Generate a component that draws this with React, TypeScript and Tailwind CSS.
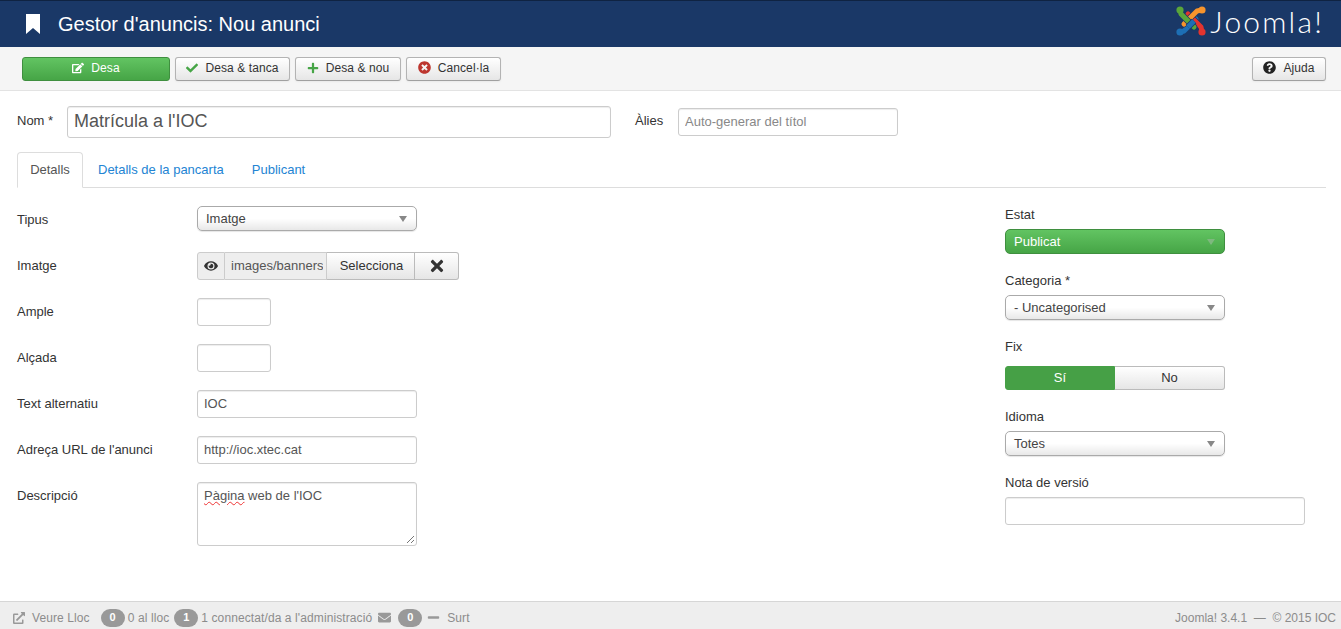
import type { ReactNode } from 'react'
import { FaCheck, FaPlus, FaTimes, FaTimesCircle, FaQuestionCircle, FaEye, FaEnvelope, FaMinus, FaEdit, FaExternalLinkAlt } from 'react-icons/fa'

function ToolButton({ icon, label, className = '' }: { icon: ReactNode; label: string; className?: string }) {
  return (
    <button className={`h-[24px] pb-[2px] flex items-center justify-center gap-[7px] rounded-[3px] border border-[#b3b3b3] border-b-[#a0a0a0] bg-gradient-to-b from-white to-[#e6e6e6] text-[12px] tracking-[0.1px] text-[#333] shadow-[0_1px_2px_rgba(0,0,0,0.05)] ${className}`}>
      {icon}
      {label}
    </button>
  )
}

function FakeSelect({ value, green = false }: { value: string; green?: boolean }) {
  return (
    <div
      className={`w-[220px] h-[25px] flex items-center justify-between pl-[8px] pr-[9px] rounded-[5px] border text-[13px] ${
        green
          ? 'border-[#3f8f3f] bg-gradient-to-b from-[#62c462] to-[#46a546] text-white'
          : 'border-[#aaa] bg-gradient-to-b from-white via-white to-[#e8e8e8] text-[#444] shadow-[0_1px_1px_rgba(0,0,0,0.1)]'
      }`}
    >
      {value}
      <span className={`w-0 h-0 border-x-[4px] border-x-transparent border-t-[6px] ${green ? 'border-t-[#7fb87f]' : 'border-t-[#888]'}`} />
    </div>
  )
}

function Field({ label, children, labelCls = '', top = false }: { label: string; children: ReactNode; labelCls?: string; top?: boolean }) {
  return (
    <div className={`flex ${top ? 'items-start' : 'items-center'}`}>
      <label className={`w-[180px] text-[13px] text-[#333] ${labelCls}`}>{label}</label>
      {children}
    </div>
  )
}

const inputCls =
  'h-[28px] rounded-[3px] border border-[#ccc] bg-white px-[6px] pb-[2px] text-[13px] text-[#555] outline-none shadow-[inset_0_1px_1px_rgba(0,0,0,0.075)]'

function SideField({ label, children, gap = 'gap-[7px]' }: { label: string; children: ReactNode; gap?: string }) {
  return (
    <div className={`flex flex-col ${gap}`}>
      <label className="text-[13px] leading-[15px] text-[#333]">{label}</label>
      {children}
    </div>
  )
}

function Badge({ value, className }: { value: string; className: string }) {
  return (
    <span className={`w-[24px] h-[18px] flex items-center justify-center rounded-full bg-[#999] text-[11px] font-bold text-white ${className}`}>
      {value}
    </span>
  )
}

// four woven arms; the last blue segment closes the weave over green
function JoomlaLogo() {
  const bg = '#1a3867'
  const blue = 'M4 27 L8 26 L20 14'
  const red = 'M26 27 L25 22 L12 9'
  const orange = 'M26 5 L21 6 L8 19'
  const green = 'M4 5 L5 9 L18 22'
  return (
    <svg width="30" height="32" viewBox="0 0 30 32" fill="none" strokeWidth="5" strokeLinecap="round" strokeLinejoin="round">
      <path d={blue} stroke="#1d6fb5" />
      <circle cx="4" cy="27" r="3.6" fill="#1d6fb5" />
      <path d={red} stroke={bg} strokeWidth="6.5" />
      <path d={red} stroke="#e3342f" />
      <circle cx="26" cy="27" r="3.6" fill="#e3342f" />
      <path d={orange} stroke={bg} strokeWidth="6.5" />
      <path d={orange} stroke="#f7942c" />
      <circle cx="26" cy="5" r="3.6" fill="#f7942c" />
      <path d={green} stroke={bg} strokeWidth="6.5" />
      <path d={green} stroke="#5aa63a" />
      <circle cx="4" cy="5" r="3.6" fill="#5aa63a" />
      <path d="M12 22 L18 16" stroke={bg} strokeWidth="6.5" strokeLinecap="butt" />
      <path d="M12 22 L18 16" stroke="#1d6fb5" strokeLinecap="butt" />
    </svg>
  )
}

export default function App() {
  return (
    <div className="h-[629px] flex flex-col bg-white font-['Liberation_Sans',Arial,sans-serif]">
      {/* Title bar */}
      <header className="h-[47px] shrink-0 flex items-center justify-between border-t border-[#0f2342] bg-[#1a3867] pl-[26px] pr-[17px]">
        <div className="flex items-center gap-[18px]">
          <svg width="14" height="20" viewBox="0 0 14 20" className="fill-white">
            <path d="M0 0H14V20L7 14L0 20Z" />
          </svg>
          <h1 className="text-[20px] leading-none text-white">Gestor d'anuncis: Nou anunci</h1>
        </div>
        <div className="flex items-center gap-[4px] mb-[6px]">
          <JoomlaLogo />
          <span className="font-['Lato',sans-serif] font-light text-[30px] tracking-[2.2px] leading-none text-white">Joomla!</span>
        </div>
      </header>

      {/* Toolbar */}
      <div className="h-[44px] shrink-0 flex items-center justify-between border-b border-[#e3e3e3] bg-[#f5f5f5] pl-[22px] pr-[15px]">
        <div className="flex items-center gap-[5px]">
          <button className="w-[148px] h-[24px] pb-[2px] flex items-center justify-center gap-[7px] rounded-[3px] border border-[#3f8f3f] bg-gradient-to-b from-[#62c462] to-[#46a546] text-[12px] tracking-[0.1px] text-white">
            <FaEdit size={12} />
            Desa
          </button>
          <ToolButton className="w-[115px]" icon={<FaCheck size={12} className="text-[#46a546]" />} label="Desa & tanca" />
          <ToolButton className="w-[106px]" icon={<FaPlus size={12} className="text-[#46a546]" />} label="Desa & nou" />
          <ToolButton className="w-[95px]" icon={<FaTimesCircle size={13} className="text-[#bd362f]" />} label="Cancel·la" />
        </div>
        <ToolButton className="w-[74px]" icon={<FaQuestionCircle size={13} className="text-[#222]" />} label="Ajuda" />
      </div>

      {/* Form */}
      <main className="flex-1 px-[15px] pl-[17px]">
        <div className="flex items-center mt-[15px]">
          <label className="w-[50px] pb-[2px] text-[13px] text-[#333]">Nom *</label>
          <input
            readOnly
            value="Matrícula a l'IOC"
            className="w-[544px] h-[32px] rounded-[3px] border border-[#ccc] px-[6px] pb-[2px] text-[18px] text-[#555] outline-none shadow-[inset_0_1px_1px_rgba(0,0,0,0.075)]"
          />
          <label className="ml-[24px] w-[43px] pb-[2px] text-[13px] text-[#333]">Àlies</label>
          <input readOnly placeholder="Auto-generar del títol" className={`${inputCls} w-[220px] placeholder:text-[#888]`} />
        </div>

        <nav className="mt-[14px] h-[36px] flex border-b border-[#ddd] text-[13px]">
          <a className="h-[36px] w-[66px] flex items-center justify-center rounded-t-[4px] border border-[#ddd] border-b-white bg-white text-[#555]">Detalls</a>
          <a className="h-[35px] ml-[15px] flex items-center text-[#2384d3]">Detalls de la pancarta</a>
          <a className="h-[35px] ml-[28px] flex items-center text-[#2384d3]">Publicant</a>
        </nav>

        <div className="flex justify-between mt-[18px]">
          <div className="flex flex-col gap-[18px]">
            <Field label="Tipus" labelCls="pt-[2px]">
              <FakeSelect value="Imatge" />
            </Field>
            <div className="mt-[3px]">
              <Field label="Imatge">
                <div className="flex h-[28px] text-[13px] text-[#555]">
                  <span className="w-[28px] flex items-center justify-center rounded-l-[3px] border border-[#ccc] bg-[#eee] text-[#333]">
                    <FaEye size={14} />
                  </span>
                  <span className="w-[102px] flex items-center pl-[6px] pr-[3px] border-y border-r border-[#ccc] bg-[#eee]">
                    <span className="overflow-hidden whitespace-nowrap">images/banners</span>
                  </span>
                  <button className="w-[88px] pl-[2px] border-y border-r border-[#bbb] bg-gradient-to-b from-white to-[#e6e6e6] text-[#333]">Selecciona</button>
                  <button className="w-[44px] flex items-center justify-center rounded-r-[3px] border-y border-r border-[#bbb] bg-gradient-to-b from-white to-[#e6e6e6] text-[#333]">
                    <FaTimes size={18} />
                  </button>
                </div>
              </Field>
            </div>
            <Field label="Ample">
              <input readOnly className={`${inputCls} w-[74px]`} />
            </Field>
            <Field label="Alçada">
              <input readOnly className={`${inputCls} w-[74px]`} />
            </Field>
            <Field label="Text alternatiu">
              <input readOnly value="IOC" className={`${inputCls} w-[220px]`} />
            </Field>
            <Field label="Adreça URL de l'anunci">
              <input readOnly value="http://ioc.xtec.cat" className={`${inputCls} w-[220px]`} />
            </Field>
            <Field label="Descripció" labelCls="pt-[4px]" top>
              <div className="relative w-[220px] h-[64px] rounded-[3px] border border-[#ccc] px-[6px] py-[4px] text-[13px] leading-[18px] text-[#555] shadow-[inset_0_1px_1px_rgba(0,0,0,0.075)]">
                <span className="underline decoration-wavy decoration-[#e33] decoration-1">Pàgina</span> web de l'IOC
                <svg width="9" height="9" viewBox="0 0 9 9" className="absolute right-[1px] bottom-[1px] stroke-[#777]">
                  <path d="M1 8L8 1M5 8L8 5" />
                </svg>
              </div>
            </Field>
          </div>

          <aside className="w-[321px] flex flex-col gap-[19px] pt-[1px]">
            <SideField label="Estat">
              <FakeSelect value="Publicat" green />
            </SideField>
            <SideField label="Categoria *">
              <FakeSelect value="- Uncategorised" />
            </SideField>
            <SideField label="Fix" gap="gap-[12px]">
              <div className="flex w-[220px] h-[24px] text-[13px]">
                <button className="w-[110px] rounded-l-[3px] bg-[#46a046] text-white border border-[#46a046]">Sí</button>
                <button className="w-[110px] rounded-r-[3px] border-y border-r border-[#bbb] bg-gradient-to-b from-white to-[#e6e6e6] text-[#333]">No</button>
              </div>
            </SideField>
            <SideField label="Idioma">
              <FakeSelect value="Totes" />
            </SideField>
            <SideField label="Nota de versió">
              <input readOnly className={`${inputCls} w-[300px]`} />
            </SideField>
          </aside>
        </div>
      </main>

      {/* Status bar */}
      <footer className="h-[28px] shrink-0 flex items-center justify-between border-t border-[#d6d6d6] bg-[#eeeeee] pt-[4px] pl-[13px] pr-[5px] text-[12px] tracking-[0.1px] text-[#8c8c8c]">
        <div className="flex items-center">
          <FaExternalLinkAlt size={12} className="text-[#999]" />
          <span className="ml-[7px]">Veure Lloc</span>
          <Badge value="0" className="ml-[11px]" />
          <span className="ml-[3px]">0 al lloc</span>
          <Badge value="1" className="ml-[5px]" />
          <span className="ml-[3px]">1 connectat/da a l'administració</span>
          <FaEnvelope size={13} className="ml-[6px] text-[#999]" />
          <Badge value="0" className="ml-[7px]" />
          <FaMinus size={13} className="ml-[5px] text-[#999]" />
          <span className="ml-[7px]">Surt</span>
        </div>
        <div className="tracking-normal">Joomla! 3.4.1 &nbsp;— &nbsp;© 2015 IOC</div>
      </footer>
    </div>
  )
}
